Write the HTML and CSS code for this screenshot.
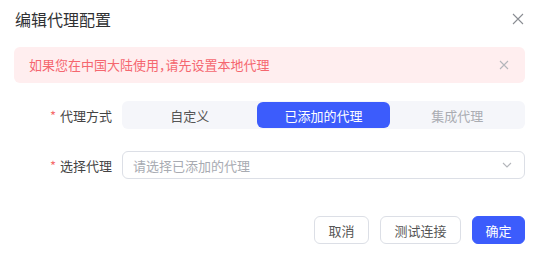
FILE: index.html
```html
<!DOCTYPE html>
<html lang="zh">
<head>
<meta charset="utf-8">
<link rel="stylesheet" href="styles.css">
</head>
<body>
<div class="dialog">
  <div class="header">
    <span class="title">编辑代理配置</span>
    <svg class="close" width="14" height="14" viewBox="0 0 14 14"><path d="M2 2L12 12M12 2L2 12" stroke="#8a8d93" stroke-width="1.1" fill="none"/></svg>
  </div>
  <div class="alert">
    <span class="alert-text">如果您在中国大陆使用，请先设置本地代理</span>
    <svg class="alert-close" width="12" height="12" viewBox="0 0 12 12"><path d="M2 2L10 10M10 2L2 10" stroke="#b4b6bb" stroke-width="1.1" fill="none"/></svg>
  </div>
  <div class="form">
    <div class="row">
      <label class="label"><span class="star">*</span>代理方式</label>
      <div class="segment">
        <div class="seg-item">自定义</div>
        <div class="seg-item active">已添加的代理</div>
        <div class="seg-item disabled">集成代理</div>
      </div>
    </div>
    <div class="row">
      <label class="label"><span class="star">*</span>选择代理</label>
      <div class="select">
        <span class="placeholder">请选择已添加的代理</span>
        <svg class="chevron" width="10" height="6" viewBox="0 0 10 6"><path d="M1 1L5 5L9 1" stroke="#b4b6bb" stroke-width="1.1" fill="none"/></svg>
      </div>
    </div>
  </div>
  <div class="footer">
    <button class="btn">取消</button>
    <button class="btn">测试连接</button>
    <button class="btn primary">确定</button>
  </div>
</div>
</body>
</html>
```

FILE: styles.css
```css
html, body {
  margin: 0;
  padding: 0;
  background: #ffffff;
}
body {
  font-family: "Noto Sans CJK SC", "Noto Sans", sans-serif;
  font-size: 13px;
  color: #333;
}
.dialog {
  width: 537px;
  height: 254px;
  box-sizing: border-box;
  padding: 0 12px 0 14px;
}
.header {
  height: 38px;
  display: flex;
  align-items: center;
  justify-content: space-between;
}
.title {
  font-size: 16px;
  color: #303133;
  padding-left: 1px;
}
.close {
  display: block;
}
.alert {
  margin-top: 9px;
  height: 36px;
  box-sizing: border-box;
  background: #ffeeef;
  border-radius: 6px;
  padding: 0 15px;
  display: flex;
  align-items: center;
  justify-content: space-between;
  color: #f5676f;
  font-size: 13px;
}
.alert-text {
  font-feature-settings: "halt";
  margin-top: -2px;
}
.alert-close {
  display: block;
}
.form {
  margin-top: 18px;
  display: flex;
  flex-direction: column;
  gap: 22px;
}
.row {
  display: flex;
  align-items: center;
  height: 28px;
  gap: 10px;
}
.label {
  width: 98px;
  text-align: right;
  color: #444;
  font-size: 13px;
}
.star {
  color: #f56c6c;
  margin-right: 4px;
}
.segment {
  flex: 1;
  height: 28px;
  box-sizing: border-box;
  padding: 1px;
  background: #f5f6fa;
  border-radius: 6px;
  display: grid;
  grid-template-columns: 1fr 1fr 1fr;
}
.seg-item {
  display: flex;
  align-items: center;
  justify-content: center;
  color: #555;
  border-radius: 6px;
}
.seg-item.active {
  background: #3c5cfc;
  color: #ffffff;
}
.seg-item.disabled {
  color: #aaacb2;
}
.select {
  flex: 1;
  height: 28px;
  box-sizing: border-box;
  border: 1px solid #dcdfe6;
  border-radius: 6px;
  display: flex;
  align-items: center;
  justify-content: space-between;
  padding: 0 12px 0 10px;
}
.placeholder {
  color: #a8abb2;
}
.chevron {
  display: block;
}
.footer {
  margin-top: 37px;
  display: flex;
  justify-content: flex-end;
  gap: 11px;
}
.btn {
  height: 28px;
  padding: 0 13.5px;
  border: 1px solid #dcdfe6;
  border-radius: 6px;
  background: #fff;
  color: #555;
  font-family: inherit;
  font-size: 13px;
  line-height: 1;
}
.btn.primary {
  background: #3c5cfc;
  border-color: #3c5cfc;
  color: #fff;
  padding: 0 12.5px;
}
```
